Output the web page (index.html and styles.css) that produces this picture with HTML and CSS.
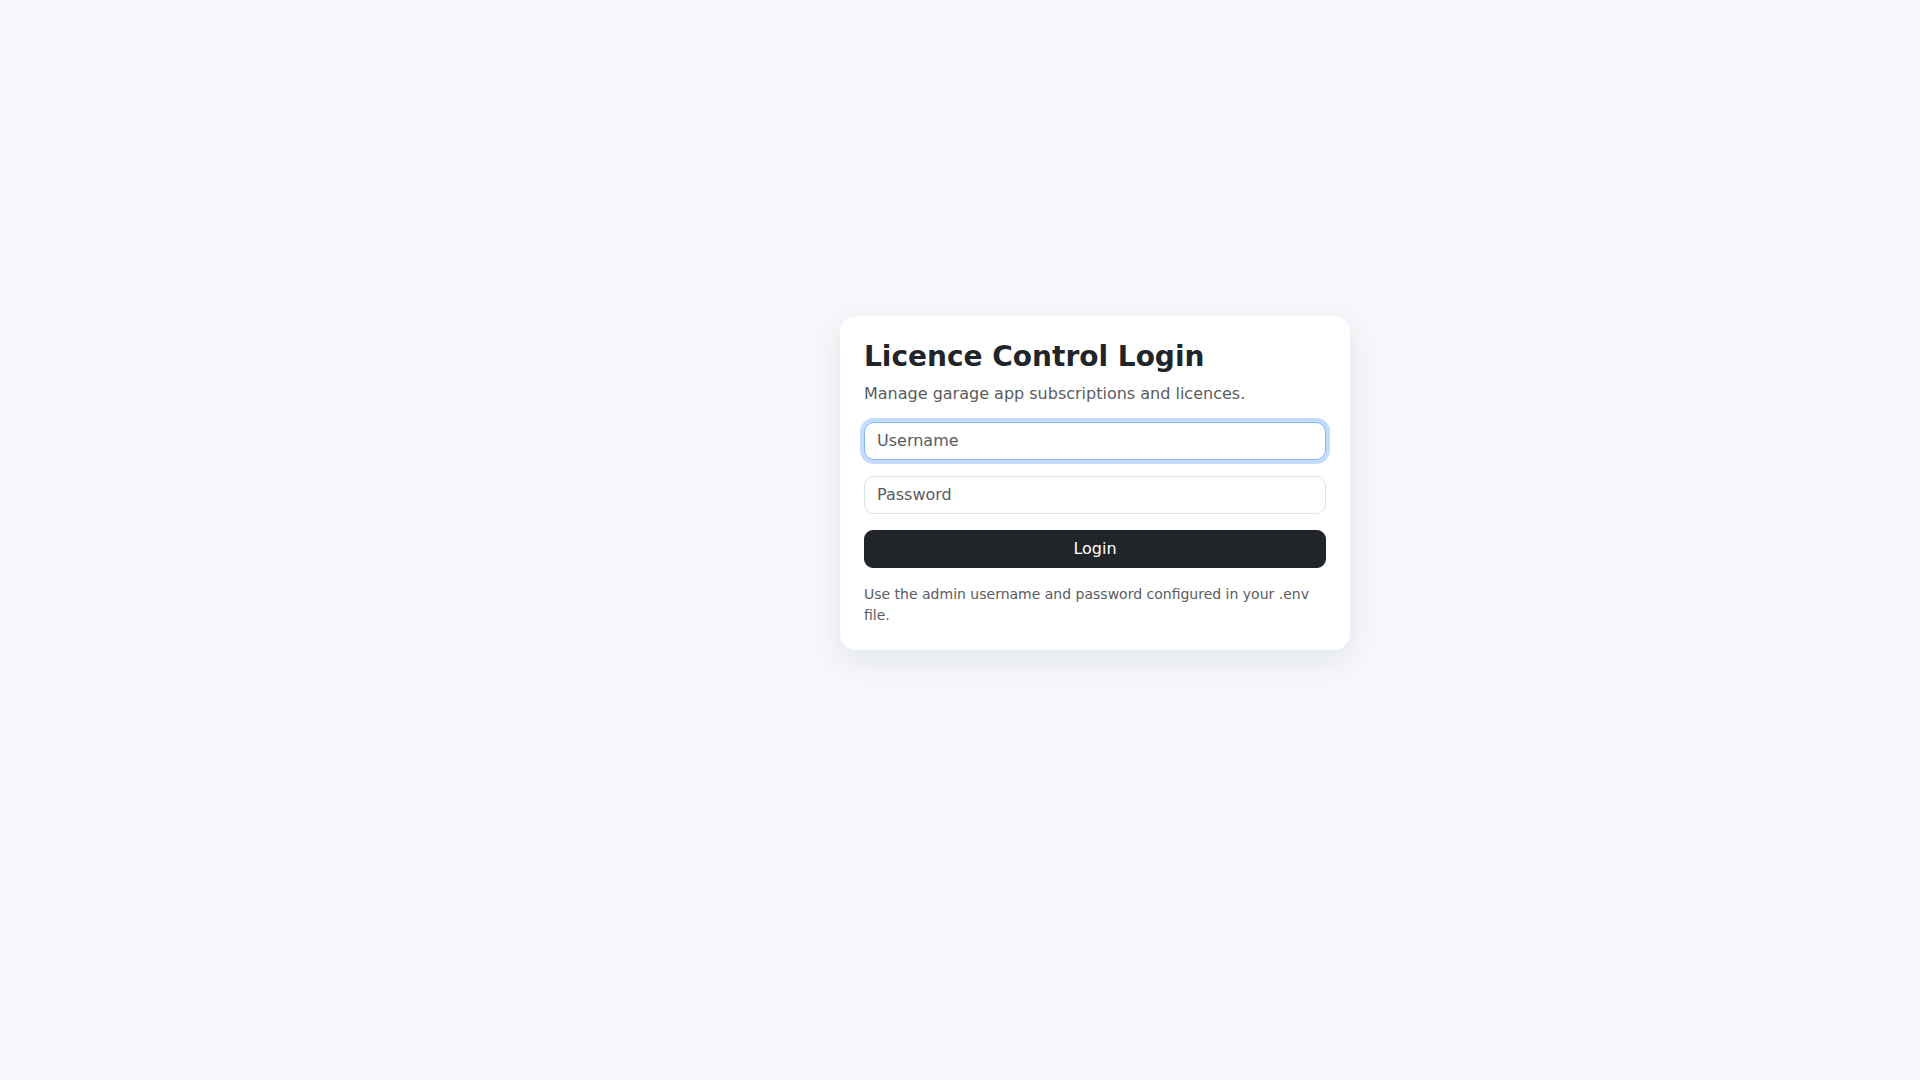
FILE: index.html
```html
<!DOCTYPE html>
<html lang="en">
<head>
<meta charset="utf-8">
<title>Licence Control Login</title>
<link rel="stylesheet" href="styles.css">
</head>
<body>
<main class="page">
  <div class="card">
    <h1 class="title">Licence Control Login</h1>
    <p class="subtitle">Manage garage app subscriptions and licences.</p>
    <form class="form">
      <input class="field field-focus" type="text" placeholder="Username">
      <input class="field" type="password" placeholder="Password">
      <button class="btn" type="button">Login</button>
    </form>
    <p class="hint">Use the admin username and password configured in your .env file.</p>
  </div>
</main>
</body>
</html>
```

FILE: styles.css
```css
* { box-sizing: border-box; }
html, body {
  margin: 0;
  padding: 0;
  height: 100%;
}
body {
  background: #f5f7fb;
  font-family: "DejaVu Sans", sans-serif;
  font-size: 16px;
  line-height: 1.5;
  color: #212529;
}
.page {
  padding-top: 316px;
  padding-left: 840px;
}
.card {
  width: 510px;
  background: #fff;
  border-radius: 16px;
  padding: 24px;
  box-shadow: 0 10px 30px rgba(15, 23, 42, 0.08);
}
.title {
  margin: 0 0 8px 0;
  font-size: 28px;
  line-height: 1.2;
  font-weight: 700;
  color: #212529;
}
.subtitle {
  margin: 0 0 16px 0;
  color: #595c5f;
}
.form {
  display: flex;
  flex-direction: column;
  gap: 16px;
}
.field {
  display: block;
  width: 100%;
  height: 38px;
  padding: 6px 12px;
  font-family: inherit;
  font-size: 16px;
  line-height: 1.5;
  color: #212529;
  background: #fff;
  border: 1px solid #dee2e6;
  border-radius: 10px;
  outline: none;
}
.field::placeholder { color: #595c5f; opacity: 1; }
.field-focus {
  border-color: #86b7fe;
  box-shadow: 0 0 0 4px rgba(13, 110, 253, 0.25);
}
.btn {
  display: block;
  width: 100%;
  height: 38px;
  padding: 6px 12px;
  font-family: inherit;
  font-size: 16px;
  line-height: 1.5;
  color: #fff;
  background: #212529;
  border: 1px solid #212529;
  border-radius: 9px;
  cursor: pointer;
}
.hint {
  margin: 16px 0 0 0;
  font-size: 14px;
  line-height: 1.5;
  color: #595c5f;
}
```
